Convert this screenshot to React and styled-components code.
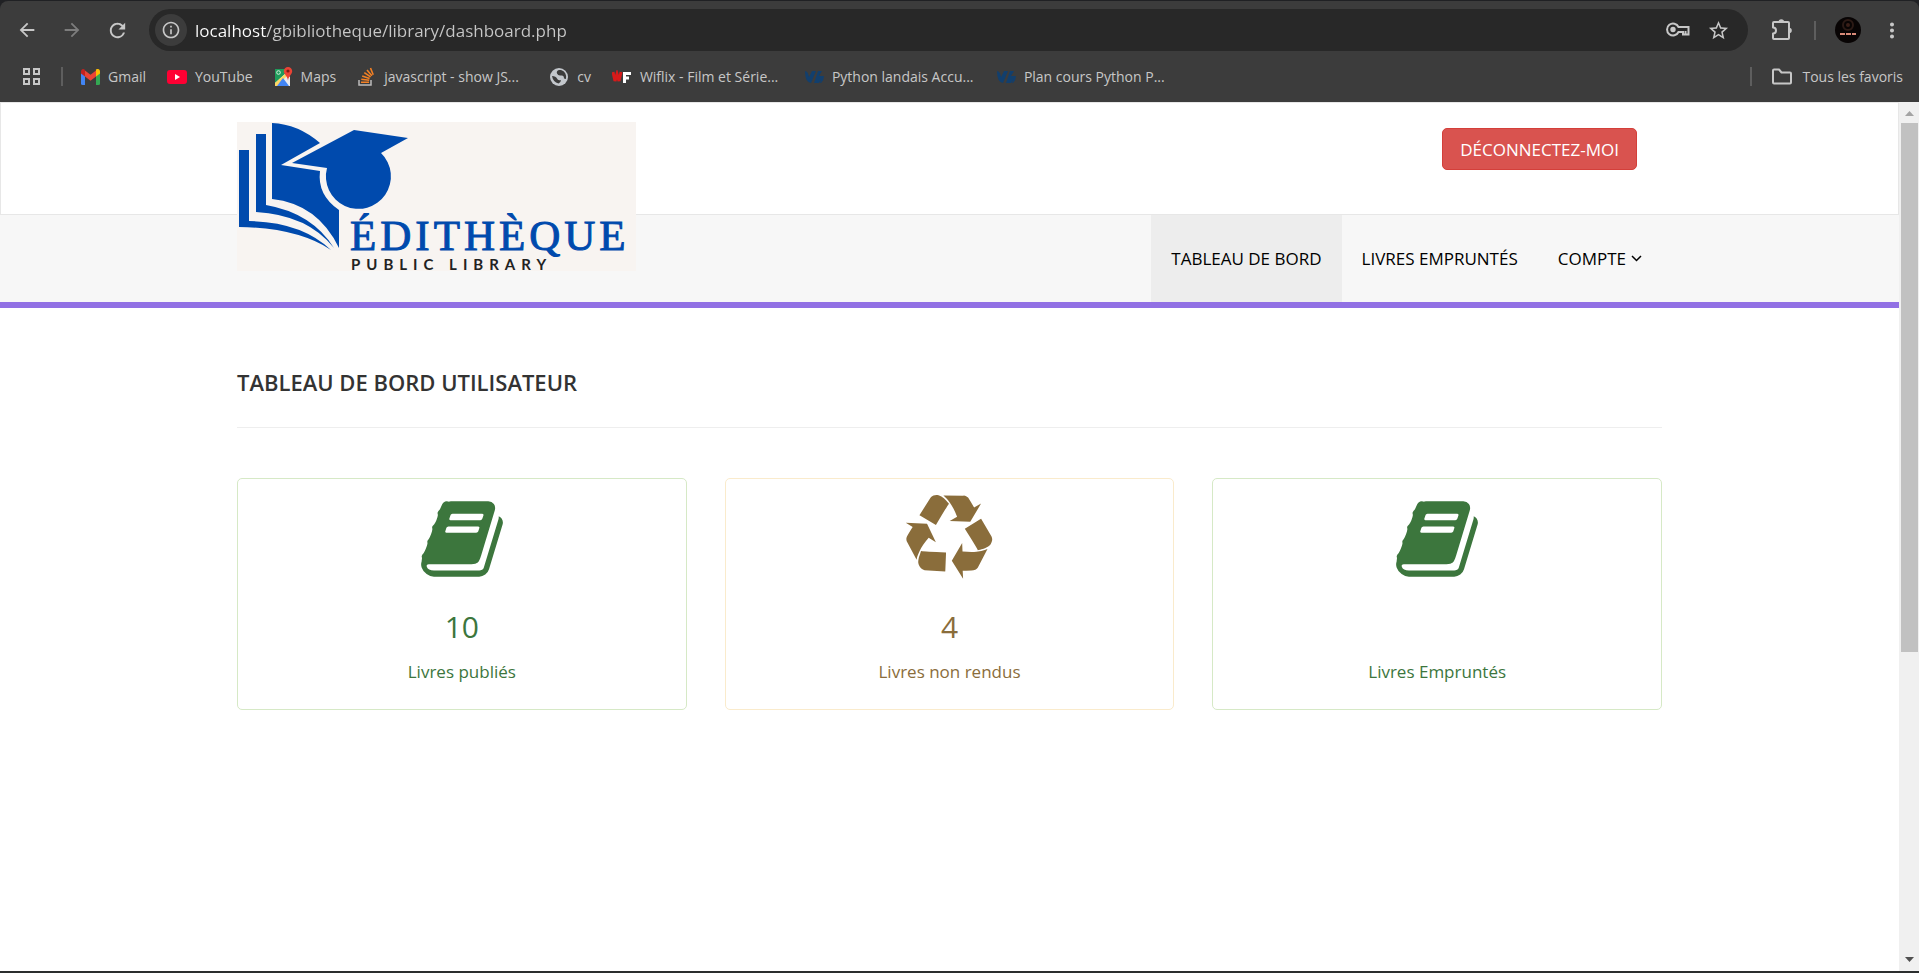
import React from "react";
import styled, { createGlobalStyle } from "styled-components";
import {
  MdArrowBack,
  MdArrowForward,
  MdRefresh,
  MdInfoOutline,
  MdStarBorder,
  MdMoreVert,
} from "react-icons/md";

const GlobalStyle = createGlobalStyle`
  *, *::before, *::after { box-sizing: border-box; }
  body {
    margin: 0;
    background: #fff;
    font-family: "Open Sans", "Noto Sans", sans-serif;
  }
`;

const Window = styled.div`
  display: flex;
  flex-direction: column;
  height: 100vh;
  overflow: hidden;
  background: #202124;
  border-bottom: 2px solid #2b2e2e;
`;

/* ---------- browser chrome ---------- */

const Chrome = styled.header`
  flex: none;
  margin-top: 1px;
  background: #3c3c3c;
  border-radius: 8px 8px 0 0;
  color: #c7c7c7;
`;

const Toolbar = styled.div`
  display: flex;
  align-items: center;
  height: 58px;
  padding: 0 15px 0 11px;
`;

const IconButton = styled.button`
  display: flex;
  align-items: center;
  justify-content: center;
  flex: none;
  width: ${(p) => p.$width || 32}px;
  height: 32px;
  margin: 0;
  padding: 0;
  border: 0;
  border-radius: 16px;
  background: ${(p) => (p.$filled ? "#3c3c3c" : "transparent")};
  color: ${(p) => (p.disabled ? "#7d7d7d" : "#c7c7c7")};
`;

const NavButtons = styled.div`
  display: flex;
  gap: 13px;
  margin-right: 16px;
`;

const AddressBar = styled.div`
  display: flex;
  align-items: center;
  flex: 1;
  height: 42px;
  padding: 0 10px 0 6px;
  border-radius: 21px;
  background: #282828;
`;

/* The host part of the address is brighter than the path. */
const Address = styled.input`
  flex: 1;
  min-width: 0;
  height: 32px;
  padding: 0 8px;
  border: 0;
  outline: 0;
  background: linear-gradient(90deg, #fff 80px, #c7c7c7 80px);
  background-clip: text;
  -webkit-background-clip: text;
  color: transparent;
  caret-color: #fff;
  font: 17px "Open Sans", "Noto Sans", sans-serif;
`;

const Separator = styled.span`
  flex: none;
  width: 2px;
  height: 19px;
  background: #5e5e5e;
`;

const ToolbarEnd = styled.div`
  display: flex;
  align-items: center;
  gap: 16px;
  margin-left: 18px;
`;

const Avatar = styled.svg`
  display: block;
  width: 26px;
  height: 26px;
`;

const BookmarkBar = styled.nav`
  display: flex;
  align-items: center;
  height: 43px;
  padding: 0 16px 8px;

  & > ${Separator} { margin: 0 18px 0 13px; }
`;

const Bookmarks = styled.div`
  display: flex;
  align-items: center;
  flex: 1;
  gap: 21px;
`;

const Bookmark = styled.a`
  display: flex;
  align-items: center;
  gap: 8px;
  color: #c7c7c7;
  font-size: 14px;
  line-height: 20px;
  text-decoration: none;
  white-space: nowrap;

  svg { flex: none; }
`;

const BookmarkText = styled.span`
  min-width: ${(p) => (p.$long ? "144px" : "0")};
`;

/* ---------- page area ---------- */

const Viewport = styled.div`
  display: flex;
  flex: 1;
  min-height: 0;
`;

const Page = styled.div`
  flex: 1;
  min-width: 0;
  overflow: hidden;
  background: #fff;
`;

const Scrollbar = styled.div`
  display: flex;
  flex-direction: column;
  align-items: center;
  flex: none;
  width: 20px;
  background: #f0f0f0;
`;

const ScrollArrow = styled.svg`
  flex: none;
  display: block;
  width: 20px;
  height: 21px;
  fill: ${(p) => p.$color};
`;

const ScrollTrack = styled.div`
  flex: 1;
  width: 17px;
`;

const ScrollThumb = styled.div`
  height: 64%;
  background: #c1c1c1;
`;

const Container = styled.div`
  width: 1425px;
  max-width: calc(100% - 38px);
  margin: 0 auto;
`;

const Masthead = styled.div`
  height: 113px;
  border: 1px solid #e7e7e7;
`;

const MastheadRow = styled(Container)`
  display: flex;
  align-items: flex-start;
  justify-content: space-between;
  padding-right: 25px;
`;

const LogoLink = styled.a`
  position: relative;
  display: block;
  margin-top: 19px;

  svg { display: block; overflow: visible; }
`;

const LogoutButton = styled.button`
  height: 42px;
  margin: 25px 0 0;
  padding: 0 17px;
  border: 1px solid #d43f3a;
  border-radius: 5px;
  background: #d9534f;
  color: #fff;
  font: 17px "Open Sans", "Noto Sans", sans-serif;
`;

const MenuSection = styled.div`
  background: #f7f7f7;
  border-bottom: 6px solid #9170e4;
`;

const Menu = styled(Container)`
  display: flex;
  justify-content: flex-end;
`;

const MenuLink = styled.a`
  display: flex;
  align-items: center;
  gap: 5px;
  height: 87px;
  padding: 0 20px;
  background: ${(p) => (p.$active ? "#ededed" : "transparent")};
  color: #000;
  font-size: 17px;
  text-decoration: none;
`;

const Title = styled.h4`
  margin: 0;
  padding: 60px 0 30px;
  border-bottom: 1px solid #eee;
  color: #333;
  font-size: 22px;
  font-weight: 600;
  line-height: 29px;
`;

const Cards = styled.div`
  display: grid;
  grid-template-columns: repeat(3, 1fr);
  gap: 38px;
  margin-top: 50px;
`;

const tones = {
  success: { text: "#3c763d", border: "#d6e9c6" },
  warning: { text: "#8a6d3b", border: "#faebcc" },
};

const Card = styled.a`
  display: flex;
  flex-direction: column;
  align-items: center;
  padding: 16px 18px 25px;
  border: 1px solid ${(p) => tones[p.$tone].border};
  border-radius: 5px;
  color: ${(p) => tones[p.$tone].text};
  text-decoration: none;

  svg { display: block; fill: currentColor; }
`;

const Count = styled.h3`
  margin: 0;
  padding-top: 27px;
  min-height: 60px;
  font-size: 30px;
  font-weight: 400;
  line-height: 33px;
`;

const Label = styled.span`
  margin-top: 16px;
  font-size: 17px;
  line-height: 25px;
`;

/* ---------- drawings ---------- */

const AppsIcon = () => (
  <svg width="20" height="20" viewBox="0 0 20 20" fill="none" stroke="#c7c7c7" strokeWidth="2">
    <path d="M2 2h5v5H2zM12 2h5v5h-5zM2 12h5v5H2zM12 12h5v5h-5z" />
  </svg>
);

const GmailIcon = () => (
  <svg width="19" height="16" viewBox="0 0 19 16">
    <path d="M0 3v11.500q0 1.500 1.500 1.500H4V6z" fill="#4285f4" />
    <path d="M19 3v11.500q0 1.500-1.500 1.500H15V6z" fill="#34a853" />
    <path d="M15 2.500V7.500L19 4.500V2.500C19 .2 16.600-.8 14.900.6z" fill="#fbbc04" />
    <path d="M0 2.500v2L4 7.500V2L3.600.6C2-.7 0 .4 0 2.500z" fill="#c5221f" />
    <path d="M4 7.500V1.500l5.500 4.200L15 1.500v6l-5.500 4.200z" fill="#ea4335" />
  </svg>
);

const YouTubeIcon = () => (
  <svg width="20" height="14" viewBox="0 0 20 14">
    <rect width="20" height="14" rx="3" fill="#ff0033" />
    <path d="M8 4l5 3-5 3z" fill="#fff" />
  </svg>
);

const MapsIcon = () => (
  <svg width="19" height="21" viewBox="0 0 19 21">
    <path d="M1 3h14v8L8 13 1 19z" fill="#1e9b5a" />
    <path d="M1 17L12 7l4 4v9H1z" fill="#e8eaed" />
    <path d="M1 17L11 8l2 2L3 20H1z" fill="#fdd663" />
    <path d="M9 12l6 8H3z" fill="#4285f4" />
    <path d="M14 1a4.200 4.200 0 0 0-4.200 4.300c0 3 3.500 4.600 4.200 9.200.7-4.600 4.200-6.200 4.200-9.200A4.200 4.200 0 0 0 14 1z" fill="#ea4335" />
    <circle cx="14" cy="5" r="1.600" fill="#7d1c14" />
    <circle cx="4.500" cy="6.500" r="1.800" fill="none" stroke="#d5eedd" />
  </svg>
);

const StackIcon = () => (
  <svg width="19" height="19" viewBox="-2 0 19 19" fill="none">
    <path d="M0 13v5h12v-5" stroke="#bcbbbb" strokeWidth="1.500" />
    <path d="M2 15.300h8M2.300 12.300l7.900.9M3.200 8.900l7.400 2.600M5.300 5.600l6.300 4.300M8 3l4.900 5.800M11.500 1l2.700 6.800" stroke="#f48024" strokeWidth="1.600" />
  </svg>
);

const GlobeIcon = () => (
  <svg width="20" height="20" viewBox="0 0 20 20">
    <circle cx="10" cy="10" r="9" fill="#c3c7cc" />
    <path d="M3 9q4 0 5 2.500T12 13q0 2-2.500 3.500Q4 15 3 9zM10 3q-3 1-2 3.500t4 2 3 3l2 .5Q18 5 12 3z" fill="#3c3c3c" />
  </svg>
);

const WiflixIcon = () => (
  <svg width="20" height="14" viewBox="0 0 20 14" fill="none" strokeWidth="3">
    <path d="M1 2l2 9 2-7 2 7 2-9" stroke="#d81a1a" />
    <path d="M12.500 13V3.500H19M12 8h5" stroke="#fff" />
  </svg>
);

const SlashIcon = () => (
  <svg width="19" height="14" viewBox="0 0 19 14" fill="#123f6d">
    <path d="M0 1q3 0 4 6l3-6h4L6 13Q0 12 0 1zM13 1h4l-3 5h5q0 4-3 7h-1l1-3-2 3h-5z" />
  </svg>
);

const KeyIcon = () => (
  <svg width="24" height="16" viewBox="0 0 24 16" fill="none" stroke="#c7c7c7" strokeWidth="2">
    <path d="M12.500 5H22.500v7.500H17V10h-4.500A6 6 0 1 1 12.500 5z" />
    <circle cx="7" cy="7.500" r="1.700" fill="#c7c7c7" />
    <path d="M19.500 9v3" />
  </svg>
);

const ExtensionIcon = () => (
  <svg width="24" height="24" viewBox="0 0 24 24" fill="none" stroke="#c7c7c7" strokeWidth="2">
    <path d="M3 5q0-1 1-1h14q1 0 1 1v15q0 1-1 1H4q-1 0-1-1v-4.500a2.800 2.800 0 0 0 0-6z" strokeLinejoin="round" />
    <path d="M8.500 4a2.800 2.800 0 0 1 5.600 0zM19 9.700a2.800 2.800 0 0 1 0 5.600z" fill="#c7c7c7" stroke="none" />
  </svg>
);

const FolderIcon = () => (
  <svg width="24" height="20" viewBox="0 0 24 20" fill="none" stroke="#c7c7c7" strokeWidth="2" strokeLinejoin="round">
    <path d="M3 15.500v-12q0-1 1-1h5l2.500 3H20q1 0 1 1v9q0 1-1 1H4q-1 0-1-1z" />
  </svg>
);

const CaretIcon = () => (
  <svg width="11" height="7" viewBox="0 0 11 7" fill="none" stroke="#000" strokeWidth="1.500">
    <path d="M1 1l4.500 4.500L10 1" />
  </svg>
);

const Logo = () => (
  <svg width="399" height="149" viewBox="0 0 399 149" role="img" aria-label="Édithèque Public Library">
    <rect width="399" height="149" fill="#f8f4f1" />
    <g fill="#004aad">
      <path d="M2 28h10v71q53 1 82 29Q61 106 2 105z" />
      <path d="M19 12h10v71q46 8 68 43Q71 93 19 90z" />
      <path d="M35 1q26 1 48 20L44 43l39 6q-3 24 19 39v38Q81 82 35 77z" />
      <path d="M117 8l54 8-27 15a32.500 32.500 0 1 1-54 15l-35-5z" />
    </g>
    <text x="113" y="128" fill="#004aad" fontFamily="Liberation Serif, serif" fontSize="43" letterSpacing="4" stroke="#004aad" strokeWidth="1">ÉDITHÈQUE</text>
    <text x="114" y="148" fill="#222" fontFamily="Lato, sans-serif" fontSize="15" fontWeight="700" letterSpacing="6">PUBLIC LIBRARY</text>
  </svg>
);

const BookIcon = () => (
  <svg width="82" height="88" viewBox="0 0 1664 1792">
    <path d="M1639 478q40 57 18 129l-275 906q-19 64-76.500 107.500t-122.500 43.500h-923q-77 0-148.500-53.500t-99.500-131.500q-24-67-2-127 0-4 3-27t4-37q1-8-3-21.500t-3-19.500q2-11 8-21t16.500-23.500 16.500-23.500q23-38 45-91.500t30-91.500q3-10 .5-30t-.5-28q3-11 17-28t17-23q21-36 42-92t25-90q1-9-2.500-32t.5-28q4-13 22-30.500t22-22.500q19-26 42.500-84.500t27.500-96.500q1-8-3-25.500t-2-26.500q2-8 9-18t18-23 17-21q8-12 16.500-30.500t15-35 16-36 19.500-32 26.500-23.500 36-11.500 47.500 5.500l-1 3q38-9 51-9h761q74 0 114 56t18 130l-274 906q-36 119-71.500 153.500t-128.500 34.500h-869q-27 0-38 15-11 16-1 43 24 70 144 70h923q29 0 56-15.500t35-41.500l300-987q7-22 5-57 38 15 59 43zm-1064 2q-4 13 2 22.500t20 9.500h608q13 0 25.500-9.500t16.500-22.500l21-64q4-13-2-22.500t-20-9.500h-608q-13 0-25.500 9.500t-16.500 22.500zm-83 256q-4 13 2 22.500t20 9.500h608q13 0 25.500-9.500t16.500-22.500l21-64q4-13-2-22.500t-20-9.500h-608q-13 0-25.500 9.500t-16.500 22.500z" />
  </svg>
);

const RecycleIcon = () => (
  <svg width="88" height="88" viewBox="0 0 1792 1792">
    <path d="M836 1169l-15 368-2 22-420-29q-36-3-67-31.500t-47-65.500q-11-27-14.500-55t4-65 12-55 21.500-64 19-53q78 12 509 28zm-387-586l180 379-147-92q-63 72-111.500 144.500t-72.500 125-39.500 94.500-18.500 63l-4 21-190-357q-17-26-18-56t6-47l8-18q35-63 114-188l-140-86zm1231 517l-188 359q-12 29-36.500 46.500t-43.500 20.500l-18 4q-71 7-219 12l8 164-230-367 211-362 7 173q170 16 283 5t170-33zm-785-924q-47 63-265 435l-317-187-19-12 225-356q20-31 60-45t80-10q24 2 48.500 12t42 21 41.500 33 36 34.500 36 39.500 32 35zm655 307l212 363q18 37 12.500 76t-27.500 74q-13 20-33 37t-38 28-48.500 22-47 16-51.500 14-46 12q-34-72-265-436l313-195zm-143-226l142-83-220 373-419-20 151-86q-34-89-75-166t-75.500-123.500-64.500-80-47-46.500l-17-13 405 1q31-3 58 10.500t39 28.500l11 15q39 61 112 190z" />
  </svg>
);

const bookmarks = [
  { label: "Gmail", Icon: GmailIcon },
  { label: "YouTube", Icon: YouTubeIcon },
  { label: "Maps", Icon: MapsIcon },
  { label: "javascript - show JS...", Icon: StackIcon, long: true },
  { label: "cv", Icon: GlobeIcon },
  { label: "Wiflix - Film et Série...", Icon: WiflixIcon, long: true },
  { label: "Python landais Accu...", Icon: SlashIcon, long: true },
  { label: "Plan cours Python P...", Icon: SlashIcon, long: true },
];

const cards = [
  { tone: "success", Icon: BookIcon, count: "10", label: "Livres publiés" },
  { tone: "warning", Icon: RecycleIcon, count: "4", label: "Livres non rendus" },
  { tone: "success", Icon: BookIcon, count: "", label: "Livres Empruntés" },
];

export default function App() {
  return (
    <Window>
      <GlobalStyle />
      <Chrome>
        <Toolbar>
          <NavButtons>
            <IconButton aria-label="Retour"><MdArrowBack size={22} /></IconButton>
            <IconButton aria-label="Avancer" disabled><MdArrowForward size={22} /></IconButton>
            <IconButton aria-label="Actualiser"><MdRefresh size={23} /></IconButton>
          </NavButtons>
          <AddressBar>
            <IconButton aria-label="Informations sur le site" $filled><MdInfoOutline size={20} /></IconButton>
            <Address aria-label="Adresse" defaultValue="localhost/gbibliotheque/library/dashboard.php" />
            <IconButton aria-label="Mots de passe" $width={40}><KeyIcon /></IconButton>
            <IconButton aria-label="Ajouter aux favoris" $width={40}><MdStarBorder size={23} /></IconButton>
          </AddressBar>
          <ToolbarEnd>
            <IconButton aria-label="Extensions"><ExtensionIcon /></IconButton>
            <Separator />
            <IconButton aria-label="Profil">
              <Avatar viewBox="0 0 26 26">
                <circle cx="13" cy="13" r="13" fill="#080404" />
                <circle cx="13" cy="8" r="5" fill="none" stroke="#2c1a15" strokeWidth="2" />
                <circle cx="13" cy="8" r="2" fill="#3a1f18" />
                <path d="M5 17h16" stroke="#d98a78" strokeWidth="2" strokeDasharray="5 1" />
              </Avatar>
            </IconButton>
            <IconButton aria-label="Menu" $width={24}><MdMoreVert size={25} /></IconButton>
          </ToolbarEnd>
        </Toolbar>
        <BookmarkBar aria-label="Favoris">
          <IconButton aria-label="Applications"><AppsIcon /></IconButton>
          <Separator />
          <Bookmarks>
            {bookmarks.map(({ label, Icon, long }) => (
              <Bookmark key={label} href="#">
                <Icon />
                <BookmarkText $long={long}>{label}</BookmarkText>
              </Bookmark>
            ))}
          </Bookmarks>
          <Separator />
          <Bookmark href="#"><FolderIcon /><BookmarkText>Tous les favoris</BookmarkText></Bookmark>
        </BookmarkBar>
      </Chrome>

      <Viewport>
        <Page>
          <Masthead>
            <MastheadRow>
              <LogoLink href="#"><Logo /></LogoLink>
              <LogoutButton type="button">DÉCONNECTEZ-MOI</LogoutButton>
            </MastheadRow>
          </Masthead>
          <MenuSection>
            <Menu as="nav">
              <MenuLink href="#" $active>TABLEAU DE BORD</MenuLink>
              <MenuLink href="#">LIVRES EMPRUNTÉS</MenuLink>
              <MenuLink href="#">COMPTE<CaretIcon /></MenuLink>
            </Menu>
          </MenuSection>
          <Container as="main">
            <Title>TABLEAU DE BORD UTILISATEUR</Title>
            <Cards>
              {cards.map(({ tone, Icon, count, label }) => (
                <Card key={label} href="#" $tone={tone}>
                  <Icon />
                  <Count>{count}</Count>
                  <Label>{label}</Label>
                </Card>
              ))}
            </Cards>
          </Container>
        </Page>
        <Scrollbar>
          <ScrollArrow $color="#a3a3a3" viewBox="0 0 20 21"><path d="M6 14l4.500-5 4.500 5z" /></ScrollArrow>
          <ScrollTrack><ScrollThumb /></ScrollTrack>
          <ScrollArrow $color="#505050" viewBox="0 0 20 21"><path d="M6 7l4.500 5 4.500-5z" /></ScrollArrow>
        </Scrollbar>
      </Viewport>
    </Window>
  );
}
